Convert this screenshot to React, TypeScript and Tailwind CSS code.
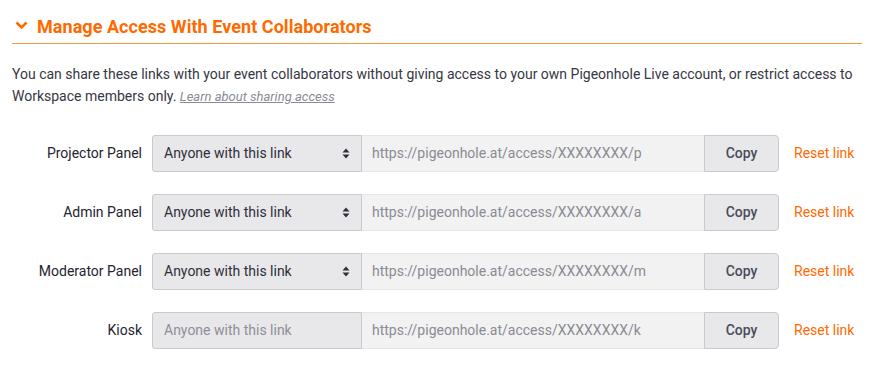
const rows = [
  { label: "Projector Panel", suffix: "p", enabled: true },
  { label: "Admin Panel", suffix: "a", enabled: true },
  { label: "Moderator Panel", suffix: "m", enabled: true },
  { label: "Kiosk", suffix: "k", enabled: false },
];

function SortIcon() {
  return (
    <svg width="8" height="11" viewBox="0 0 8 11" className="shrink-0">
      <path d="M4 0.5 L7.5 4.5 H0.5 Z" fill="#2f2f3a" />
      <path d="M4 10.5 L7.5 6.5 H0.5 Z" fill="#2f2f3a" />
    </svg>
  );
}

export default function App() {
  return (
    <div className="w-[890px] h-[391px] bg-white pl-3 pt-[12px] font-['Roboto',sans-serif] text-[#363744]">
      <div className="w-[850px] h-[32px] flex items-center gap-[9px] border-b border-[#f29a3c] pb-[3px]">
        <svg width="13" height="9" viewBox="0 0 13 9" className="ml-[3px] -mt-[2px]">
          <path d="M1.5 1.5 L6.5 6.5 L11.5 1.5" stroke="#ff6a00" strokeWidth="2.6" fill="none" />
        </svg>
        <h2 className="text-[18px] font-bold text-[#ff6a00] tracking-[0.05px]">Manage Access With Event Collaborators</h2>
      </div>

      <div className="mt-[19px] w-[850px] text-[14px] leading-[22px] text-[#363744]">
        <p>You can share these links with your event collaborators without giving access to your own Pigeonhole Live account, or restrict access to</p>
        <p>
          Workspace members only.{" "}
          <a className="italic underline text-[#8a8b94] text-[13px]">Learn about sharing access</a>
        </p>
      </div>

      <div className="mt-[27px] flex flex-col gap-[22px]">
        {rows.map((r) => (
          <div key={r.label} className="flex items-center h-[37px]">
            <div className="w-[131px] text-right text-[14px] font-normal text-[#23242f] pr-[1px]">{r.label}</div>
            <div
              className={`ml-[9px] w-[210px] h-[37px] flex items-center justify-between pl-[11px] pr-[11px] border border-[#c9c9ce] rounded-l-[3px] text-[14px] bg-[#e8e8eb] ${
                r.enabled ? "text-[#2f2f3a]" : "text-[#8e8e98]"
              }`}
            >
              <span>Anyone with this link</span>
              {r.enabled && <SortIcon />}
            </div>
            <div className="w-[342px] h-[37px] flex items-center pl-[10px] border-y border-[#e6e6e8] bg-[#f2f2f2] text-[14px] text-[#8a8b94]">
              https://pigeonhole.at/access/XXXXXXXX/{r.suffix}
            </div>
            <button className="w-[75px] h-[37px] border border-[#c9c9ce] rounded-r-[4px] bg-[#e8e8eb] text-[14px] font-medium text-[#4b4c58]">
              Copy
            </button>
            <a className="ml-[15px] text-[14px] text-[#ff6a00]">Reset link</a>
          </div>
        ))}
      </div>
    </div>
  );
}
